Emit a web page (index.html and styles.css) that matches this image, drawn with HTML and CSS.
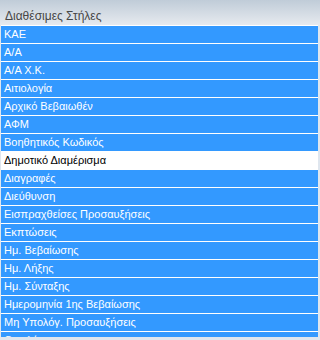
FILE: index.html
```html
<!DOCTYPE html>
<html lang="el">
<head>
<meta charset="utf-8">
<link rel="stylesheet" href="styles.css">
</head>
<body>
<div class="panel">
  <div class="header">Διαθέσιμες Στήλες</div>
  <ul class="list">
    <li class="item">ΚΑΕ</li>
    <li class="item">Α/Α</li>
    <li class="item">Α/Α Χ.Κ.</li>
    <li class="item">Αιτιολογία</li>
    <li class="item">Αρχικό Βεβαιωθέν</li>
    <li class="item">ΑΦΜ</li>
    <li class="item">Βοηθητικός Κωδικός</li>
    <li class="item selected">Δημοτικό Διαμέρισμα</li>
    <li class="item">Διαγραφές</li>
    <li class="item">Διεύθυνση</li>
    <li class="item">Εισπραχθείσες Προσαυξήσεις</li>
    <li class="item">Εκπτώσεις</li>
    <li class="item">Ημ. Βεβαίωσης</li>
    <li class="item">Ημ. Λήξης</li>
    <li class="item">Ημ. Σύνταξης</li>
    <li class="item">Ημερομηνία 1ης Βεβαίωσης</li>
    <li class="item">Μη Υπολόγ. Προσαυξήσεις</li>
    <li class="item">Οφειλέτης</li>
  </ul>
</div>
</body>
</html>
```
FILE: styles.css
```css
html, body {
  margin: 0;
  padding: 0;
}
body {
  height: 340px;
  overflow: hidden;
  background: #dfe6ee;
}
.panel {
  display: flex;
  flex-direction: column;
  height: 340px;
}
.header {
  height: 25px;
  box-sizing: border-box;
  padding: 9px 0 0 5px;
  background: linear-gradient(to bottom, #c0ccd8, #e6eaef);
  font-family: "Liberation Sans", Arial, sans-serif;
  font-size: 12px;
  line-height: 14px;
  color: #474747;
}
.list {
  list-style: none;
  margin: 0 2px 0 1px;
  padding: 0;
  height: 312px;
  overflow: hidden;
  border-top: 1px solid #ffffff;
  box-sizing: border-box;
}
.item {
  height: 17px;
  border-bottom: 1px solid #ffffff;
  background: #3399ff;
  color: #ffffff;
  padding-left: 3px;
  font-family: "Liberation Sans", Arial, sans-serif;
  font-size: 11px;
  line-height: 16px;
  white-space: nowrap;
  -webkit-font-smoothing: none;
}
.item.selected {
  background: #ffffff;
  color: #000000;
}
```
